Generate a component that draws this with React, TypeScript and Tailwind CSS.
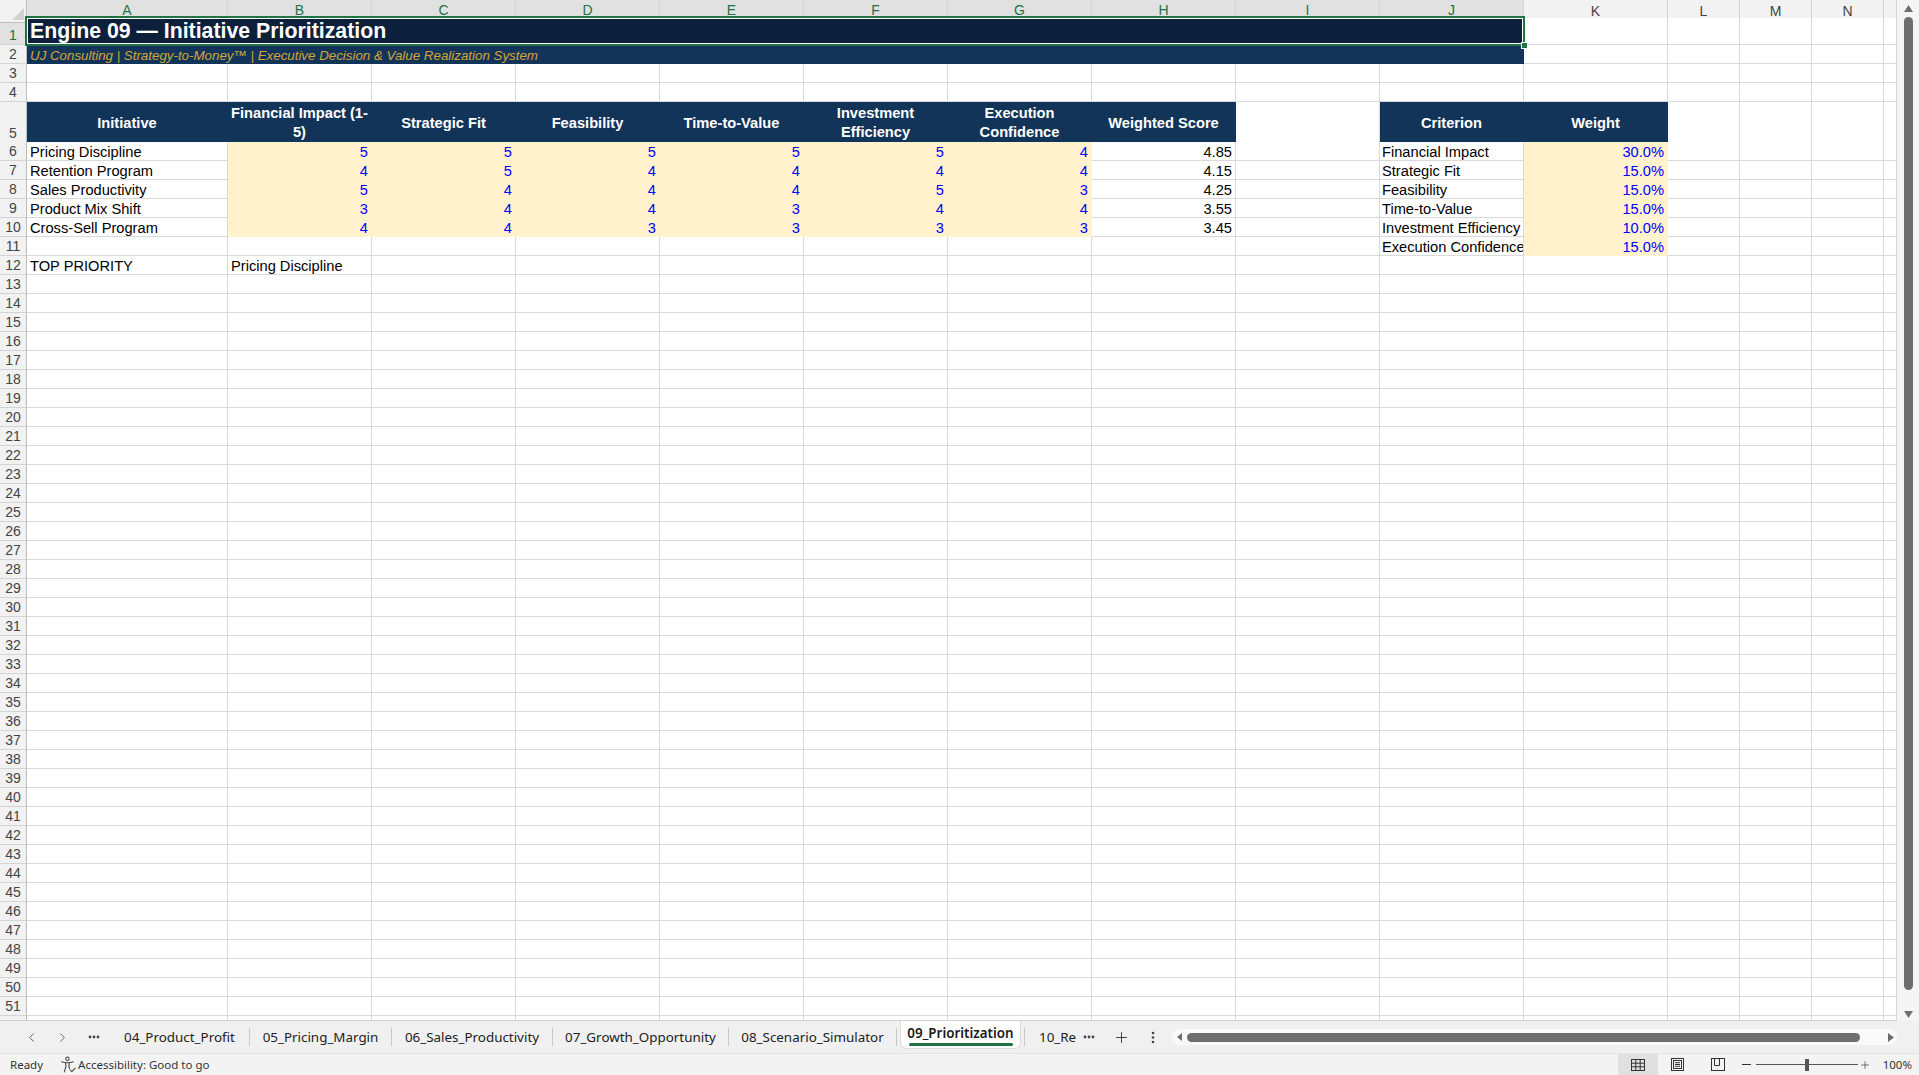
import { ChevronLeft, ChevronRight, Plus } from 'lucide-react';
import type { ReactNode } from 'react';

// sheet column template: row header, A, B..K, L..N, partial O
const GRID = 'grid grid-cols-[27px_201px_repeat(10,144px)_repeat(3,72px)_13px]';
const LETTERS = ['A', 'B', 'C', 'D', 'E', 'F', 'G', 'H', 'I', 'J', 'K', 'L', 'M', 'N', ''];

type Fill = 'white' | 'cream';

const initiatives: [string, number[], string][] = [
  ['Pricing Discipline', [5, 5, 5, 5, 5, 4], '4.85'],
  ['Retention Program', [4, 5, 4, 4, 4, 4], '4.15'],
  ['Sales Productivity', [5, 4, 4, 4, 5, 3], '4.25'],
  ['Product Mix Shift', [3, 4, 4, 3, 4, 4], '3.55'],
  ['Cross-Sell Program', [4, 4, 3, 3, 3, 3], '3.45'],
];

const weights: [string, string][] = [
  ['Financial Impact', '30.0%'],
  ['Strategic Fit', '15.0%'],
  ['Feasibility', '15.0%'],
  ['Time-to-Value', '15.0%'],
  ['Investment Efficiency', '10.0%'],
  ['Execution Confidence', '15.0%'],
];

function Cell({ fill = 'white', right, blue, tight, children }: { fill?: Fill; right?: boolean; blue?: boolean; tight?: boolean; children?: ReactNode }) {
  return (
    <div
      className={`flex items-end overflow-hidden whitespace-nowrap border-r border-b text-[14.67px] leading-[16px] ${
        tight ? 'pl-[2px]' : 'px-[3px]'
      } ${fill === 'cream' ? 'bg-[#fff2cc] border-[#fff2cc]' : 'bg-white border-[#d9d9d9]'} ${right ? 'justify-end' : ''} ${
        blue ? 'text-[#0000ff]' : 'text-black'
      }`}
    >
      {children}
    </div>
  );
}

function Head({ children }: { children?: ReactNode }) {
  return (
    <div className="flex items-center justify-center border-r border-b border-[#133459] bg-[#133459] px-[2px] pt-[2px] text-center text-[14.67px] font-bold leading-[19px] text-white">
      {children}
    </div>
  );
}

function blanks(n: number, from = 0) {
  return Array.from({ length: n }, (_, i) => <Cell key={`b${from + i}`} />);
}

function RowHead({ n, active }: { n?: number; active?: boolean }) {
  return (
    <div
      className={`flex items-end justify-center border-r border-b text-[14px] leading-[17px] ${
        active
          ? 'bg-[#e1e1e1] text-[#217346] border-r-[#217346] border-b-[#cfcfcf]'
          : 'bg-[#f2f2f2] text-[#444] border-r-[#bdbdbd] border-b-[#d4d4d4]'
      }`}
    >
      {n}
    </div>
  );
}

function SheetRow({ n, h, active, children }: { n?: number; h: string; active?: boolean; children: ReactNode }) {
  return (
    <div className={`${GRID} ${h}`}>
      <RowHead n={n} active={active} />
      {children}
    </div>
  );
}

function ColumnHeader() {
  return (
    <div className={`${GRID} h-[18px]`}>
      <div className="relative border-r border-b border-r-[#bdbdbd] border-b-[#bdbdbd] bg-[#f2f2f2]">
        <svg className="absolute right-[2px] bottom-[2px]" width="12" height="12" viewBox="0 0 12 12">
          <polygon points="12,0 12,12 0,12" fill="#d2d2d2" />
        </svg>
      </div>
      {LETTERS.map((l, i) => (
        <div
          key={i}
          className={`flex items-center justify-center border-r border-r-[#d4d4d4] text-[14px] ${
            i < 10
              ? 'bg-[#e1e1e1] text-[#217346] border-b-2 border-b-[#217346]'
              : 'bg-[#f2f2f2] text-[#444] border-b border-b-[#bdbdbd]'
          }`}
        >
          {l}
        </div>
      ))}
    </div>
  );
}

function Sheet() {
  const rest = Array.from({ length: 39 }, (_, i) => i + 13);
  return (
    <div className="h-[1021px] w-[1897px] overflow-hidden border-b border-[#d0d0d0] bg-white">
      <ColumnHeader />

      <SheetRow n={1} h="h-[27px]" active>
        <div className="relative col-span-10 flex items-center border-b border-[#0c1f3b] bg-[#0c1f3b] pl-[3px] text-[21.3px] font-bold leading-[26px] text-white">
          Engine 09 — Initiative Prioritization
          <div className="pointer-events-none absolute -left-[2px] -top-[2px] -right-[1px] -bottom-[2px] z-10 border-2 border-[#217346]">
            <div className="absolute inset-0 border border-white" />
          </div>
          <div className="absolute -right-[4px] -bottom-[5px] z-20 h-[7px] w-[7px] border border-white bg-[#217346]" />
        </div>
        {blanks(5)}
      </SheetRow>

      <SheetRow n={2} h="h-[19px]">
        <div className="col-span-10 flex items-end border-b border-[#133459] bg-[#133459] pl-[3px] text-[13.33px] italic leading-[15px] text-[#d4a53a]">
          UJ Consulting | Strategy-to-Money™ | Executive Decision &amp; Value Realization System
        </div>
        {blanks(5)}
      </SheetRow>

      <SheetRow n={3} h="h-[19px]">{blanks(15)}</SheetRow>
      <SheetRow n={4} h="h-[19px]">{blanks(15)}</SheetRow>

      <SheetRow n={5} h="h-[40px]">
        <Head>Initiative</Head>
        <Head>
          Financial Impact (1-
          <br />
          5)
        </Head>
        <Head>Strategic Fit</Head>
        <Head>Feasibility</Head>
        <Head>Time-to-Value</Head>
        <Head>Investment Efficiency</Head>
        <Head>Execution Confidence</Head>
        <Head>Weighted Score</Head>
        <Cell />
        <Head>Criterion</Head>
        <Head>Weight</Head>
        {blanks(4)}
      </SheetRow>

      {initiatives.map(([name, scores, total], i) => (
        <SheetRow key={name} n={6 + i} h="h-[19px]">
          <Cell>{name}</Cell>
          {scores.map((s, j) => (
            <Cell key={j} fill="cream" right blue>
              {s}
            </Cell>
          ))}
          <Cell right>{total}</Cell>
          <Cell />
          <Cell tight>{weights[i][0]}</Cell>
          <Cell fill="cream" right blue>
            {weights[i][1]}
          </Cell>
          {blanks(4)}
        </SheetRow>
      ))}

      <SheetRow n={11} h="h-[19px]">
        {blanks(9)}
        <Cell tight>{weights[5][0]}</Cell>
        <Cell fill="cream" right blue>
          {weights[5][1]}
        </Cell>
        {blanks(4, 20)}
      </SheetRow>

      <SheetRow n={12} h="h-[19px]">
        <Cell>TOP PRIORITY</Cell>
        <Cell>Pricing Discipline</Cell>
        {blanks(13)}
      </SheetRow>

      {rest.map((n) => (
        <SheetRow key={n} n={n} h="h-[19px]">
          {blanks(15)}
        </SheetRow>
      ))}
      {/* partially visible row 52 */}
      <SheetRow h="h-[19px]">{blanks(15)}</SheetRow>
    </div>
  );
}

function VScroll() {
  return (
    <div className="flex h-[1021px] w-[22px] flex-col items-center bg-[#f5f5f5]">
      <svg className="mt-[5px]" width="9" height="7" viewBox="0 0 9 7">
        <polygon points="4.5,0 9,7 0,7" fill="#6e6e6e" />
      </svg>
      <div className="mt-[5px] h-[973px] w-[9px] rounded-full bg-[#6e6e6e]" />
      <div className="flex-1" />
      <svg className="mb-[3px]" width="9" height="7" viewBox="0 0 9 7">
        <polygon points="0,0 9,0 4.5,7" fill="#6e6e6e" />
      </svg>
    </div>
  );
}

function Dots() {
  return (
    <svg width="12" height="4" viewBox="0 0 12 4">
      <circle cx="2" cy="2" r="1.4" fill="#444" />
      <circle cx="6" cy="2" r="1.4" fill="#444" />
      <circle cx="10" cy="2" r="1.4" fill="#444" />
    </svg>
  );
}

const tabs: [string, string][] = [
  ['04_Product_Profit', 'w-[139px]'],
  ['05_Pricing_Margin', 'w-[142px]'],
  ['06_Sales_Productivity', 'w-[161px]'],
  ['07_Growth_Opportunity', 'w-[176px]'],
  ['08_Scenario_Simulator', 'w-[168px]'],
];

function TabBar() {
  return (
    <div className="flex h-[32px] items-center bg-[#f0f0f0] font-['Noto_Sans',sans-serif] text-[13.4px] text-[#222]">
      <div className="w-[16px]" />
      <div className="flex w-[30px] justify-center text-[#555]">
        <ChevronLeft size={15} strokeWidth={1.4} />
      </div>
      <div className="flex w-[32px] justify-center text-[#555]">
        <ChevronRight size={15} strokeWidth={1.4} />
      </div>
      <div className="flex w-[32px] justify-center">
        <Dots />
      </div>
      {tabs.map(([name, w], i) => (
        <div key={name} className={`flex h-[18px] items-center justify-center ${w} ${i > 0 ? 'border-l border-[#c8c8c8]' : ''}`}>
          {name}
        </div>
      ))}
      <div className="h-[18px] w-[1px] bg-[#c8c8c8]" />
      <div className="mx-[3px] flex h-[28px] w-[121px] flex-col items-center self-start rounded-b-[6px] border border-t-0 border-[#dadada] bg-white">
        <div className="mt-[3px] font-semibold leading-[18px] text-[#1a1a1a]">09_Prioritization</div>
        <div className="mt-[1px] h-[3px] w-[104px] rounded-full bg-[#217346]" />
      </div>
      <div className="h-[18px] w-[1px] bg-[#c8c8c8]" />
      <div className="w-[56px] pl-[14px]">10_Re</div>
      <div className="flex w-[16px] justify-center">
        <Dots />
      </div>
      <div className="flex w-[48px] justify-center text-[#333]">
        <Plus size={17} strokeWidth={1.3} />
      </div>
      <div className="flex w-[16px] justify-center">
        <svg width="4" height="13" viewBox="0 0 4 13">
          <circle cx="2" cy="2" r="1.3" fill="#444" />
          <circle cx="2" cy="6.5" r="1.3" fill="#444" />
          <circle cx="2" cy="11" r="1.3" fill="#444" />
        </svg>
      </div>
      <div className="w-[11px]" />
      <div className="flex h-[16px] w-[725px] items-center rounded-full bg-[#f9f9f9] pr-[3px] pl-[5px]">
        <svg width="5" height="8" viewBox="0 0 5 8">
          <polygon points="5,0 5,8 0,4" fill="#6e6e6e" />
        </svg>
        <div className="ml-[5px] h-[9px] w-[673px] rounded-full bg-[#6e6e6e]" />
        <div className="flex-1" />
        <svg width="6" height="9" viewBox="0 0 6 9">
          <polygon points="0,0 6,4.5 0,9" fill="#6e6e6e" />
        </svg>
      </div>
    </div>
  );
}

function StatusBar() {
  return (
    <div className="flex h-[22px] items-center border-t border-[#e4e4e4] bg-[#f3f3f3] font-['Noto_Sans',sans-serif] text-[11.5px] text-[#333]">
      <div className="pl-[10px]">Ready</div>
      <div className="ml-[17px] flex items-center">
        <svg width="17" height="17" viewBox="0 0 16 16" fill="none" stroke="#444" strokeWidth="1" strokeLinecap="round" strokeLinejoin="round">
          <circle cx="7" cy="2.6" r="1.6" />
          <path d="M1.5 5.5 Q7 7.2 12.5 5.5" />
          <path d="M5.3 6.6 L5.6 10 L4 15 M8.7 6.6 L8.4 10 L9 12" />
          <path d="M9.8 13.2 L11.2 14.6 L14.2 11.4" />
        </svg>
        <span className="ml-[1px]">Accessibility: Good to go</span>
      </div>
      <div className="ml-auto flex h-full items-center">
        <div className="flex h-full w-[40px] items-center justify-center bg-[#e0e0e0]">
          <svg width="14" height="12" viewBox="0 0 14 12" fill="none" stroke="#333" strokeWidth="1">
            <rect x="0.5" y="0.5" width="13" height="11" />
            <path d="M4.8 0.5 V11.5 M9.2 0.5 V11.5 M0.5 4.2 H13.5 M0.5 7.8 H13.5" />
          </svg>
        </div>
        <div className="flex h-full w-[40px] items-center justify-center">
          <svg width="13" height="13" viewBox="0 0 13 13" fill="none" stroke="#333" strokeWidth="1">
            <rect x="0.5" y="0.5" width="12" height="12" />
            <rect x="2.5" y="2.5" width="8" height="8" />
            <path d="M4 4.7 H9 M4 6.5 H9 M4 8.3 H9" />
          </svg>
        </div>
        <div className="flex h-full w-[40px] items-center justify-center">
          <svg width="14" height="13" viewBox="0 0 14 13" fill="none" stroke="#333" strokeWidth="1">
            <rect x="0.5" y="0.5" width="13" height="12" />
            <path d="M3.5 0.5 V7.5 H8.5 V0.5" />
          </svg>
        </div>
        <div className="flex w-[18px] justify-center">
          <div className="h-[1px] w-[9px] bg-[#333]" />
        </div>
        <div className="relative flex h-[12px] w-[102px] items-center">
          <div className="h-[1px] w-full bg-[#555]" />
          <div className="absolute left-[49px] top-0 h-[12px] w-[4px] bg-[#555]" />
        </div>
        <div className="flex w-[14px] justify-center text-[#333]">
          <Plus size={12} strokeWidth={1.3} />
        </div>
        <div className="ml-[11px] mr-[7px]">100%</div>
      </div>
    </div>
  );
}

export default function App() {
  return (
    <div className="flex h-[1075px] w-[1919px] flex-col overflow-hidden bg-white font-['Liberation_Sans',Arial,sans-serif]">
      <div className="flex">
        <Sheet />
        <VScroll />
      </div>
      <TabBar />
      <StatusBar />
    </div>
  );
}
